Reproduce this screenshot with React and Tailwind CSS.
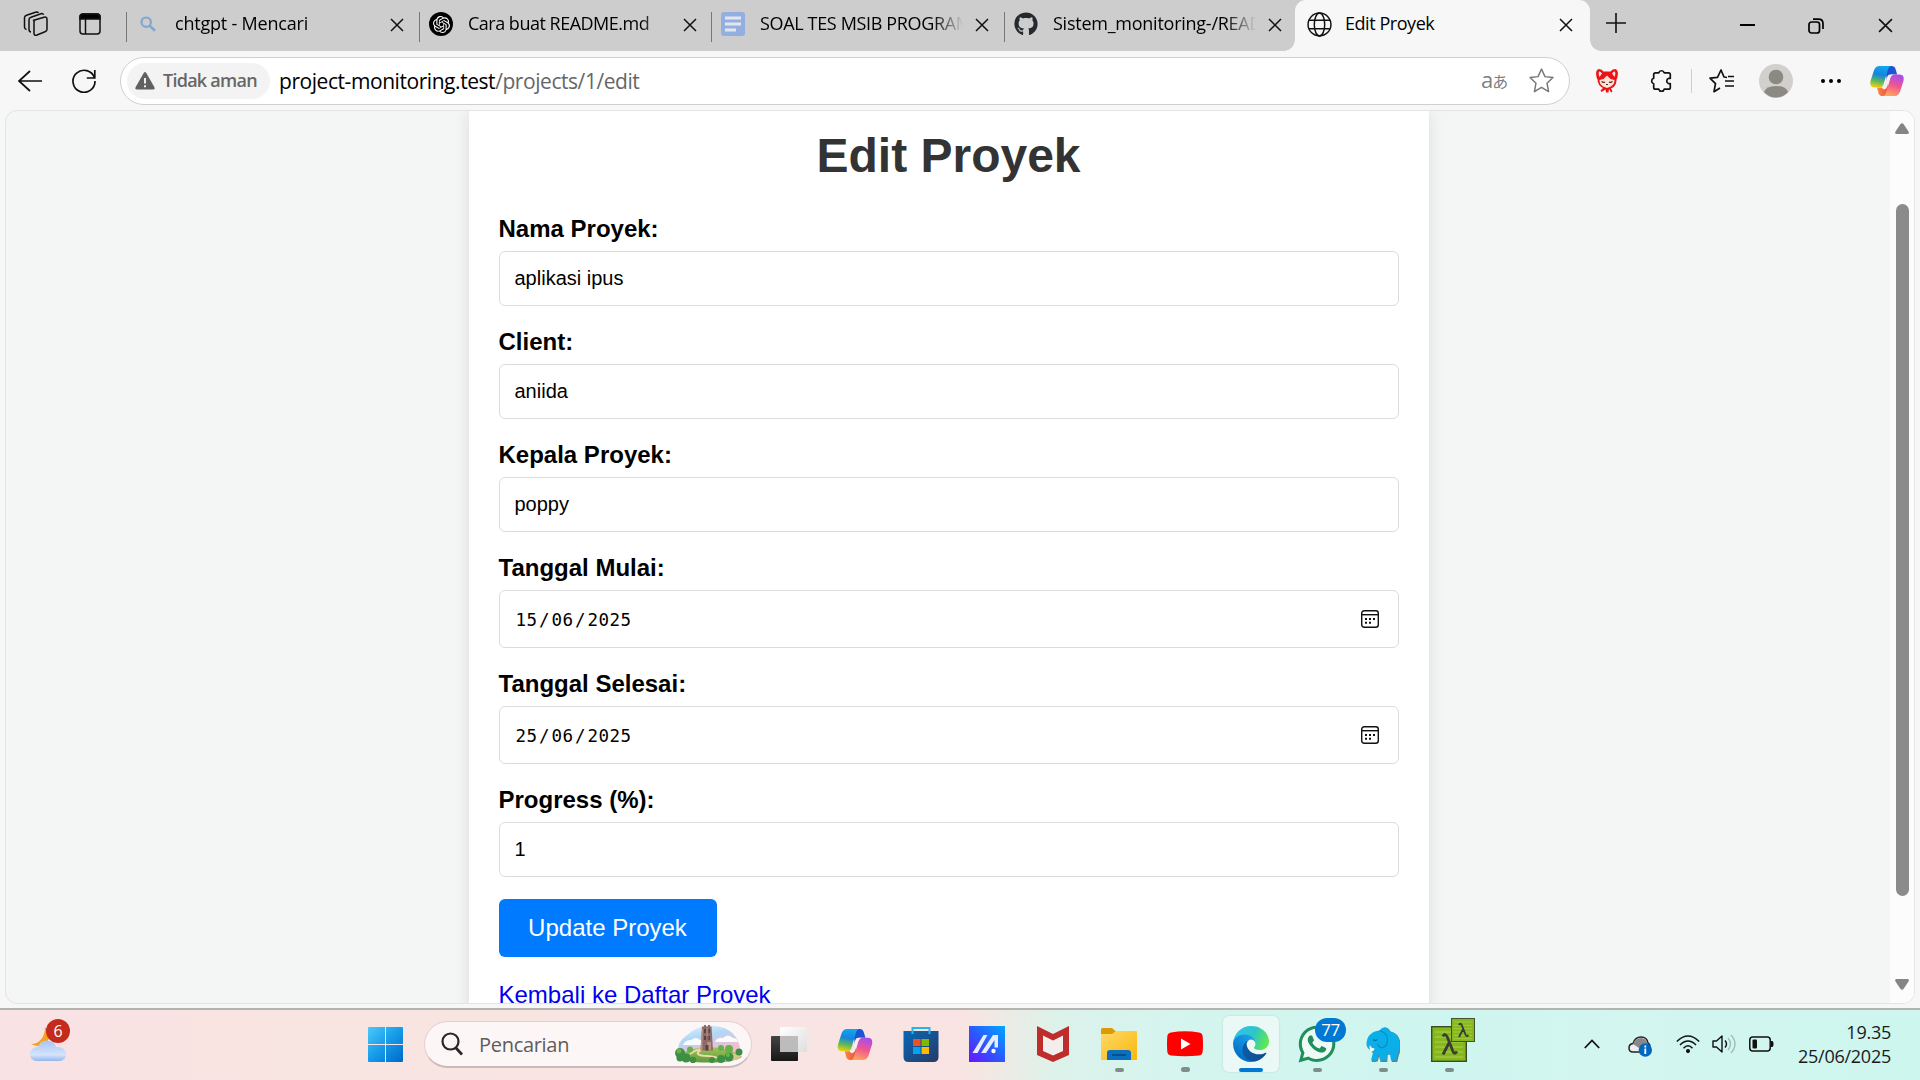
import React from "react";
import { FaGithub, FaWhatsapp } from "react-icons/fa6";
import { SiOpenai } from "react-icons/si";

const Cross = ({ className = "w-[14px] h-[14px]" }) => (
  <svg viewBox="0 0 14 14" className={className} stroke="#111" strokeWidth="1.5" fill="none">
    <path d="M1 1l12 12M13 1L1 13" />
  </svg>
);

const SearchFavicon = () => (
  <svg viewBox="0 0 16 16" className="ml-[4px] h-4 w-4" fill="none" stroke="#7fa8d0" strokeWidth="2.2">
    <circle cx="6.2" cy="6.2" r="4.7" />
    <path d="M9.6 9.6l5.4 5.2" strokeWidth="2.6" />
  </svg>
);

const GptFavicon = () => (
  <span className="flex h-6 w-6 items-center justify-center rounded-full bg-black">
    <SiOpenai className="h-[17px] w-[17px] text-white" />
  </span>
);

const DocFavicon = () => (
  <svg viewBox="0 0 24 24" className="h-6 w-6">
    <rect width="24" height="24" rx="3" fill="#93aee0" />
    <path d="M4 6h16M4 12h16M4 18h11" stroke="#e4e6ea" strokeWidth="2.8" />
  </svg>
);

const Globe = () => (
  <svg viewBox="0 0 24 24" className="h-[25px] w-[25px]" fill="none" stroke="#111" strokeWidth="1.4">
    <circle cx="12" cy="12" r="11" />
    <ellipse cx="12" cy="12" rx="5" ry="11" />
    <path d="M2 8h20M2 16h20" />
  </svg>
);

const tabs = [
  { title: "chtgpt - Mencari", icon: <SearchFavicon />, w: "w-[293px]", track: "tracking-[-0.2px]" },
  { title: "Cara buat README.md", icon: <GptFavicon />, w: "w-[292px]", track: "tracking-[-0.5px]" },
  { title: "SOAL TES MSIB PROGRAM", icon: <DocFavicon />, w: "w-[293px]", track: "tracking-[-0.35px]" },
  { title: "Sistem_monitoring-/README", icon: <FaGithub className="h-6 w-6 text-[#24292f]" />, w: "w-[291px]", track: "tracking-[-0.25px]" },
];

function TabStrip() {
  return (
    <div className="flex h-[51px] bg-[#cdcdcd] text-[18px] text-black">
      <div className="flex w-[126px] items-center pb-[3px] pl-[23px]">
        <svg viewBox="0 0 26 26" className="h-[26px] w-[26px]" fill="none" stroke="#111" strokeWidth="1.5">
          <path d="M10 9.5l11-3.3q3-.7 3 2v10q0 1.8-2 2.5l-8 3.3q-3 1-3-1.800V11q0-1.200 1-1.500z" />
          <path d="M8 21q-2-.2-2-2.500V8.500Q6 7 8 6.300l10-3.600q2-.5 2.600 1" />
          <path d="M3.500 18.500Q1.500 18 1.500 16V6.500q0-1.500 2-2.200L12.500 1.200q2.200-.6 3 .8" />
        </svg>
        <svg viewBox="0 0 22 22" className="ml-[30px] h-[22px] w-[22px]" fill="none" stroke="#111" strokeWidth="1.5">
          <rect x="1" y="1" width="20" height="20" rx="3" />
          <path d="M1 6V4q0-3 3-3h14q3 0 3 3v2z" fill="#000" />
          <path d="M6.500 6v15" />
        </svg>
      </div>
      {tabs.map((t) => (
        <div key={t.title} className={`flex shrink-0 items-center pb-[3px] ${t.w}`}>
          <span className="mt-[6px] h-[30px] w-px shrink-0 bg-[#777]" />
          <span className="ml-[9px] flex w-6 shrink-0 justify-start">{t.icon}</span>
          <span className={`ml-[15px] mt-[-1px] w-[203px] shrink-0 overflow-hidden whitespace-nowrap ${t.track} [mask-image:linear-gradient(to_right,black_85%,transparent)]`}>
            {t.title}
          </span>
          <span className="ml-[12px] mt-[2px] flex">
            <Cross />
          </span>
        </div>
      ))}
      <div className="relative flex w-[295px] shrink-0 items-center rounded-t-[11px] bg-[#f7f7f7] pb-[3px] pl-[12px]">
        <span className="absolute -left-[11px] bottom-0 h-[11px] w-[11px] bg-[radial-gradient(circle_at_0_0,transparent_10.500px,#f7f7f7_11px)]" />
        <span className="absolute -right-[11px] bottom-0 h-[11px] w-[11px] bg-[radial-gradient(circle_at_100%_0,transparent_10.500px,#f7f7f7_11px)]" />
        <Globe />
        <span className="ml-[13px] mt-[-1px] w-[214px] tracking-[-0.45px]">Edit Proyek</span>
        <span className="mt-[2px]">
          <Cross />
        </span>
      </div>
      <svg viewBox="0 0 20 20" className="ml-[16px] mt-[13px] h-5 w-5" stroke="#111" strokeWidth="1.6">
        <path d="M10 0v20M0 10h20" />
      </svg>
      <span className="ml-[114px] mt-[24px] h-[2px] w-[15px] bg-black" />
      <svg viewBox="0 0 16 16" className="ml-[53px] mt-[18px] h-4 w-4" fill="none" stroke="#000" strokeWidth="1.7">
        <rect x="1" y="4" width="10.500" height="11" rx="2.500" />
        <path d="M5 1.200h5.500q4.500 0 4.500 4.500V11" />
      </svg>
      <span className="ml-[54px] mt-[18px]">
        <Cross className="h-[15px] w-[15px]" />
      </span>
    </div>
  );
}

const Copilot = ({ id, className }) => (
  <svg viewBox="0 0 36 34" className={className}>
    <defs>
      <linearGradient id={`${id}a`} x1="0.500" y1="0" x2="0.300" y2="1">
        <stop offset="0" stopColor="#12a5f2" />
        <stop offset="0.400" stopColor="#1685dc" />
        <stop offset="0.700" stopColor="#5bb75f" />
        <stop offset="1" stopColor="#f4cf0c" />
      </linearGradient>
      <linearGradient id={`${id}b`} x1="0.700" y1="0" x2="0.400" y2="1">
        <stop offset="0" stopColor="#a64df0" />
        <stop offset="0.500" stopColor="#ef5591" />
        <stop offset="1" stopColor="#ffa45b" />
      </linearGradient>
      <linearGradient id={`${id}c`} x1="0" y1="0" x2="1" y2="0.500">
        <stop offset="0" stopColor="#1451cf" />
        <stop offset="1" stopColor="#2456d9" />
      </linearGradient>
      <linearGradient id={`${id}d`}>
        <stop offset="0" stopColor="#fb8b3a" />
        <stop offset="1" stopColor="#e84a4a" />
      </linearGradient>
    </defs>
    <path d="M16 1h7q3 0 4 3l1.800 6H24q-3 0-4 3l-2 5z" fill={`url(#${id}c)`} />
    <path d="M20 33h-7q-3 0-4-3l-1.600-6H12q3 0 4-3l2-6z" fill={`url(#${id}d)`} />
    <path d="M10 1h13q-3 0-4 4l-4.500 15q-1 4-5 4H5q-6 0-4.500-7L4 6q1.500-5 6-5z" fill={`url(#${id}a)`} />
    <path d="M26 33H13q3 0 4-4l4.500-15q1-4 5-4H31q6 0 4.500 7L32 28q-1.500 5-6 5z" fill={`url(#${id}b)`} />
    <path d="M18.300 12.500q.8-2.500 3-2.500h3.500q-2.800.5-3.600 3.500l-3.300 10q-.9 2.500-3.100 2.500-1.600-.2-2.300-2 2.600-.7 3.300-3z" fill="#f7eff0" />
  </svg>
);

function AddressRow() {
  return (
    <div className="flex h-[59px] shrink-0 items-center bg-[#f7f7f7]">
      <svg viewBox="0 0 24 22" className="ml-[18px] h-[22px] w-6" fill="none" stroke="#111" strokeWidth="1.700">
        <path d="M24 11H1M12 1L1 11l11 10" />
      </svg>
      <svg viewBox="0 0 24 24" className="ml-[30px] h-6 w-6" fill="none" stroke="#111" strokeWidth="1.700">
        <path d="M22.500 9A11 11 0 1 0 23 12M22.800 1v8h-8" />
      </svg>
      <div className="ml-[24px] flex h-[48px] w-[1450px] items-center rounded-full border-[1.500px] border-[#cfcfcf] bg-white pl-[6px]">
        <div className="flex h-9 w-[143px] items-center rounded-full bg-[#f3f3f3] pl-[8px]">
          <svg viewBox="0 0 20 18" className="h-[18px] w-5">
            <path d="M8.700 1q1.300-1.800 2.600 0l8 14q1 2.500-1.500 2.500H2.200Q-.3 17.500.7 15z" fill="#606060" />
            <path d="M10 6v5.500M10 13.200v2" stroke="#fff" strokeWidth="1.800" />
          </svg>
          <span className="ml-[8px] whitespace-nowrap text-[18px] font-semibold tracking-[-0.750px] text-[#676767]">Tidak aman</span>
        </div>
        <div className="ml-[9px] mt-[2px] w-[1202px] whitespace-nowrap text-[21px] tracking-[-0.440px] text-black">
          project-monitoring.test<span className="text-[#666]">/projects/1/edit</span>
        </div>
        <div className="flex w-[30px] items-center text-[#808080]">
          <span className="mt-[-3px] text-[22px] leading-none">a</span>
          <span className="ml-[-1px] font-['Noto_Sans_CJK_JP',sans-serif] text-[16px] leading-none">あ</span>
        </div>
        <svg viewBox="0 0 24 24" className="ml-[18px] h-[25px] w-[25px]" fill="none" stroke="#777" strokeWidth="1.400" strokeLinejoin="round">
          <path d="M12 1l3.300 7.300 7.700.9-5.700 5.400 1.500 8.100L12 18.600l-6.800 4.100 1.500-8.100L1 9.200l7.700-.9z" />
        </svg>
      </div>
      <svg viewBox="0 0 22 24" className="ml-[26px] h-6 w-[22px]">
        <path d="M3 0q3 0 4.500 2.500h7Q16 0 19 0q3.500 1 2.800 6-.3 3-1.300 4.500.2 5.500-3.500 8l-2 .8 1.500 3.200-1.500 1-2-3.500-.5 3.500h-2.500l-.5-3-4 2.500-1-1.500L7 19q-5.300-2.500-5.500-8.500Q.5 9 .2 6-.5 1 3 0z" fill="#ee1118" />
        <path d="M3 2.500q2 0 3 2L3.500 8Q2 5 3 2.500zM19 2.500q-2 0-3 2L18.500 8q1.500-3 .5-5.500z" fill="#fbe3d3" />
        <path d="M3.500 11l4-1 3.500-3.500 3.500 3.500 4 1q.3 6-7.500 8-7.800-2-7.500-8z" fill="#fde5d3" />
        <path d="M5.500 12.500q2 1.500 3.500.5M16.500 12.500q-2 1.500-3.500.5M10 15.500h2" fill="none" stroke="#5a2520" strokeWidth="1.200" />
      </svg>
      <svg viewBox="0 0 24 24" className="ml-[31px] h-6 w-6" fill="none" stroke="#111" strokeWidth="1.700" strokeLinejoin="round">
        <path d="M6.500 3.800h3.300a2.800 2.800 0 0 1 5.400 0h4.300q1.800 0 1.800 1.800v3.700h-1.500a2.800 2.800 0 0 0 0 5.400h1.500v3.700q0 1.800-1.800 1.800h-4.300a2.800 2.800 0 0 1-5.400 0H6.500q-1.800 0-1.800-1.800v-3.700a2.800 2.800 0 0 1 0-5.400V5.600q0-1.800 1.800-1.800z" />
      </svg>
      <span className="ml-[18px] h-6 w-px bg-[#cfcfcf]" />
      <svg viewBox="0 0 26 24" className="ml-[17px] h-6 w-[26px]" fill="none" stroke="#111" strokeWidth="1.700" strokeLinejoin="round">
        <path d="M18 8.500l-3-.5L12 1 8.500 8.300 1 9.200l5.500 5.400L5 22.700l6-3.700M16 12h9M16 17h9M19 7.500h6" />
      </svg>
      <svg viewBox="0 0 34 34" className="ml-[24px] h-[34px] w-[34px]">
        <circle cx="17" cy="17" r="17" fill="#d2d0cc" />
        <circle cx="17" cy="13" r="7.300" fill="#8c8985" />
        <path d="M5 28q2-6 12-6t12 6q-5 5.500-12 5.500T5 28z" fill="#8c8985" />
      </svg>
      <svg viewBox="0 0 22 6" className="ml-[27px] h-[6px] w-[22px]">
        <circle cx="3" cy="3" r="2" />
        <circle cx="11" cy="3" r="2" />
        <circle cx="19" cy="3" r="2" />
      </svg>
      <Copilot id="bar" className="ml-[28px] h-8 w-[34px]" />
    </div>
  );
}

const CalendarIcon = () => (
  <svg viewBox="0 0 18 18" className="h-[18px] w-[18px]" fill="none" stroke="#111" strokeWidth="1.400">
    <rect x="0.700" y="0.700" width="16.600" height="16.600" rx="2.500" />
    <path d="M1 4.700h16" />
    <path d="M4 9h2M8 9h2M12 9h2M4 12.700h2M8 12.700h2" strokeWidth="2" />
  </svg>
);

const DateValue = ({ value }) => {
  const [d, m, y] = value.split("/");
  return (
    <span className="ml-px flex pt-[2px] font-['DejaVu_Sans_Mono',monospace] text-[17.500px] tracking-[0.460px]">
      {d}
      <span className="w-[14px] text-center">/</span>
      {m}
      <span className="w-[14px] text-center">/</span>
      {y}
    </span>
  );
};

const fields = [
  { label: "Nama Proyek:", value: "aplikasi ipus" },
  { label: "Client:", value: "aniida" },
  { label: "Kepala Proyek:", value: "poppy" },
  { label: "Tanggal Mulai:", value: "15/06/2025", date: true },
  { label: "Tanggal Selesai:", value: "25/06/2025", date: true },
  { label: "Progress (%):", value: "1" },
];

function Page() {
  return (
    <div className="mx-[5px] flex h-[894px] overflow-hidden rounded-[12px] border border-[#e3e5e5] bg-[#f4f6f6] font-['Liberation_Sans',Arial,sans-serif]">
      <div className="flex grow justify-center overflow-hidden pl-px">
        <main className="h-[960px] w-[960px] bg-white px-[30px] pt-[17px] shadow-[0_0_15px_rgba(0,0,0,0.1)]">
          <h1 className="text-center text-[48px] font-bold leading-[55px] text-[#333]">Edit Proyek</h1>
          <form className="pt-[32px]">
            {fields.map((f) => (
              <div key={f.label} className="mb-[22px]">
                <label className="block h-[36px] text-[24px] font-bold leading-[27px] text-black">{f.label}</label>
                <div
                  className={`flex items-center justify-between rounded-[6px] border border-[#dcdcdc] pl-[15px] pr-[19px] text-[20px] text-black ${f.date ? "h-[58px]" : "h-[55px]"}`}
                >
                  {f.date ? <DateValue value={f.value} /> : <span className="pb-[2px]">{f.value}</span>}
                  {f.date && <CalendarIcon />}
                </div>
              </div>
            ))}
            <button type="button" className="block h-[58px] w-[218px] rounded-[6px] bg-[#007bff] text-[24px] text-white">
              Update Proyek
            </button>
            <a className="mt-[24px] block text-[24px] leading-[27px] text-[#0000ee] underline">Kembali ke Daftar Proyek</a>
          </form>
        </main>
      </div>
      <div className="flex w-[24px] shrink-0 flex-col items-center bg-[#fcfcfc]">
        <svg viewBox="0 0 14 11" className="mt-[12px] h-[11px] w-[14px] shrink-0">
          <path d="M5.500 1q1.500-1.500 3 0l5 7.500q1 2.500-1 2.500h-11q-2 0-1-2.500z" fill="#858585" />
        </svg>
        <span className="mt-[70px] h-[692px] w-[13px] shrink-0 rounded-full bg-[#8b8b8b]" />
        <svg viewBox="0 0 14 11" className="mt-[83px] h-[11px] w-[14px] shrink-0 rotate-180">
          <path d="M5.500 1q1.500-1.500 3 0l5 7.500q1 2.500-1 2.500h-11q-2 0-1-2.500z" fill="#858585" />
        </svg>
      </div>
    </div>
  );
}

const TaskView = () => (
  <svg viewBox="0 0 36 36" className="h-9 w-9">
    <defs>
      <linearGradient id="tv" x1="0" y1="0" x2="0" y2="1">
        <stop offset="0" stopColor="#444" />
        <stop offset="1" stopColor="#171717" />
      </linearGradient>
      <linearGradient id="tw" x1="0" y1="0" x2="1" y2="1">
        <stop offset="0" stopColor="#fff" />
        <stop offset="1" stopColor="#dedede" />
      </linearGradient>
    </defs>
    <rect y="10" width="27" height="25" rx="1" fill="url(#tv)" />
    <rect x="9" y="1" width="27" height="25" rx="1" fill="url(#tw)" />
    <rect x="9" y="10" width="18" height="16" fill="#bcbcbc" />
  </svg>
);

const Store = () => (
  <svg viewBox="0 0 36 36" className="h-9 w-9">
    <defs>
      <linearGradient id="st" x1="0" y1="0" x2="1" y2="1">
        <stop offset="0" stopColor="#0869b8" />
        <stop offset="1" stopColor="#263a66" />
      </linearGradient>
    </defs>
    <path d="M.5 5h35v26q0 5-5 5h-25q-5 0-5-5z" fill="url(#st)" />
    <path d="M9.500 8V2h17v6" fill="none" stroke="#22b5ee" strokeWidth="2" />
    <path d="M10 13h7.500v7H10z" fill="#f25022" />
    <path d="M18.500 13H26v7h-7.500z" fill="#7fba00" />
    <path d="M10 21h7.500v7H10z" fill="#00a4ef" />
    <path d="M18.500 21H26v7h-7.500z" fill="#ffb900" />
  </svg>
);

const MyAsus = () => (
  <svg viewBox="0 0 36 36" className="h-9 w-9">
    <defs>
      <linearGradient id="as" x1="0" y1="1" x2="1" y2="0">
        <stop offset="0" stopColor="#6a12ff" />
        <stop offset="0.500" stopColor="#2a5bff" />
        <stop offset="1" stopColor="#00a8ff" />
      </linearGradient>
    </defs>
    <rect width="36" height="36" fill="url(#as)" />
    <path d="M14.500 9h4L8.500 27H3.500zM24 9h5v12.500h-3.500V14L17 27h-5z" fill="#e4ecff" />
    <circle cx="24.500" cy="25" r="2.200" fill="#fff" />
  </svg>
);

const McAfee = () => (
  <svg viewBox="0 0 32 36" className="h-9 w-8">
    <path d="M0 0l16 8 16-8v29l-16 7-16-7z" fill="#bf2c2c" />
    <path d="M6 9.500l10 5 10-5V25l-10 4.500L6 25z" fill="#f2eeeb" />
  </svg>
);

const Folder = () => (
  <svg viewBox="0 0 36 36" className="h-9 w-9">
    <defs>
      <linearGradient id="fo" x1="0" y1="0" x2="1" y2="1">
        <stop offset="0" stopColor="#ffd968" />
        <stop offset="1" stopColor="#f9b70c" />
      </linearGradient>
    </defs>
    <path d="M0 3.500Q0 2 1.500 2H11l4 3.500L12 9H0z" fill="#dc9a06" />
    <path d="M0 8h11l4-3h20q1 0 1 1v28H0z" fill="url(#fo)" />
    <path d="M6 34V27q0-3 3-3h18q3 0 3 3v7z" fill="#0b6fc0" />
    <path d="M11 29h14" stroke="#07437f" strokeWidth="1.500" />
  </svg>
);

const YouTube = () => (
  <svg viewBox="0 0 36 26" className="h-[26px] w-9">
    <path d="M4 1.500Q18-.8 32 1.500q3.500.5 3.700 4 .6 8 0 15-.2 3.500-3.700 4-14 1.600-28 0-3.500-.5-3.700-4-.6-8 0-15 .2-3.500 3.700-4z" fill="#f00" />
    <path d="M14 7.500l9.500 5.500-9.500 5.500z" fill="#fff" />
  </svg>
);

const Edge = () => (
  <svg viewBox="0 0 256 256" className="h-9 w-9">
    <defs>
      <linearGradient id="e1" x1="0.200" x2="1" y1="0.700" y2="0.700">
        <stop offset="0" stopColor="#0c59a4" />
        <stop offset="1" stopColor="#114a8b" />
      </linearGradient>
      <linearGradient id="e2" x1="0.800" y1="0.200" x2="0.300" y2="1">
        <stop offset="0" stopColor="#1b9de2" />
        <stop offset="0.500" stopColor="#0b85d9" />
        <stop offset="1" stopColor="#0067b8" />
      </linearGradient>
      <linearGradient id="e3" x1="0" y1="0.400" x2="1" y2="0.700">
        <stop offset="0" stopColor="#35c1f1" />
        <stop offset="0.500" stopColor="#2cc5c8" />
        <stop offset="1" stopColor="#66eb45" />
      </linearGradient>
    </defs>
    <path fill="url(#e1)" d="M231.070 190.540c-3.400 1.770-6.900 3.340-10.500 4.700a101.100 101.100 0 0 1-35.650 6.460c-47.050 0-88.040-32.360-88.040-73.900a31.420 31.420 0 0 1 16.390-27.260c-42.560 1.790-53.500 46.150-53.500 72.120 0 73.400 67.700 80.900 82.250 80.900 7.860 0 19.720-2.300 26.820-4.550l1.310-.44a128.340 128.340 0 0 0 66.600-52.800 4 4 0 0 0-5.680-5.230z" />
    <path fill="url(#e2)" d="M105.730 241.420a79.200 79.200 0 0 1-22.740-21.340 80.720 80.720 0 0 1 29.600-120.880c3.130-1.470 8.450-4.070 15.560-3.960a32.350 32.350 0 0 1 25.690 13.010 31.900 31.900 0 0 1 6.360 18.660c0-.2 24.460-79.600-80-79.600-43.900 0-80 41.670-80 78.210a130.160 130.160 0 0 0 12.110 56 128 128 0 0 0 156.380 67.110 75.550 75.550 0 0 1-62.780-8.840z" />
    <path fill="url(#e3)" d="M152.330 148.860c-.81 1.050-3.300 2.500-3.300 5.660 0 2.610 1.700 5.120 4.720 7.230 14.380 10 41.490 8.680 41.560 8.680a59.560 59.560 0 0 0 30.270-8.350 61.380 61.380 0 0 0 30.430-52.880c.26-22.410-8-37.310-11.340-43.910C223.460 23.840 177.720 0 128 0A128 128 0 0 0 0 126.200c.48-36.540 36.800-66.050 80-66.050 3.500 0 23.460.34 42 10.070 16.340 8.580 24.900 18.940 30.850 29.210 6.180 10.670 7.280 24.150 7.280 29.520 0 5.370-2.740 13.330-7.800 19.910z" />
  </svg>
);

const Whatsapp = () => (
  <div className="relative">
    <svg viewBox="0 0 36 36" className="h-9 w-9">
      <path d="M1 35l2.500-9.500A16.500 16.500 0 1 1 11 33z" fill="#eefaf5" />
    </svg>
    <FaWhatsapp className="absolute -left-[3px] -top-[3px] h-[42px] w-[42px] text-[#1f8f5c]" />
    <span className="absolute -top-[8px] left-[16px] flex h-6 w-[31px] items-center justify-center rounded-full bg-[#0078d4] text-[17px] tracking-[-0.500px] text-white">
      77
    </span>
  </div>
);

const Elephant = () => (
  <svg viewBox="0 0 34 36" className="h-9 w-[34px]">
    <path
      d="M13.500 4.500Q16 1 19.500 1.300q3 .5 4.500 4 8 1.500 9.500 10 1 8-1.500 13.500l-1.500 6.500h-5.500L24 28h-3l-.5 7.300h-6.800L12.500 29 11 34.500q-3.500 1.500-6 .5l2-8q-2-1.500-2.700-3.500Q0 22 .5 17 1.500 6 13.500 4.500z"
      transform="translate(0.800 0.700)"
      fill="#35525c"
      opacity="0.700"
    />
    <path d="M13.500 4.500Q16 1 19.500 1.300q3 .5 4.500 4 8 1.500 9.500 10 .5 8-2 13.500L30 34.500h-5L24 28h-3l-.5 6.500h-6.300L12.500 28 11 34q-3.500 1.500-6 .5l2-8q-2-1.500-2.700-3.500Q0 22 .5 17 1.500 6 13.500 4.500z" fill="#0aaee8" />
    <path d="M13.500 4.500q8 2.500 8 9 0 7-6 8.500-3-1-4-4" fill="none" stroke="#058dc4" strokeWidth="1.200" />
    <path d="M7 13.500q2 2 4.500 0" fill="none" stroke="#05759f" strokeWidth="1.200" />
    <path d="M3.800 19q1.500 3.500 5 3.500-1 2.500-3.300 3-2.700-2.500-1.700-6.500z" fill="#fff" />
  </svg>
);

const Lambda = ({ className }) => (
  <svg viewBox="0 0 36 36" className={className}>
    <rect x="0.700" y="0.700" width="34.600" height="34.600" fill="#86b81b" stroke="#3c4a2b" strokeWidth="1.400" />
    <path d="M4 6h28M4 11h28M4 16h28M4 21h28M4 26h28M4 31h28" stroke="#a9cf52" strokeWidth="1.200" />
    <path d="M12 10.500q2-4.500 4.500 1l5.500 14q1.500 3.500 4 0M18.500 16l-6.500 12.500" fill="none" stroke="#3a3c38" strokeWidth="2.800" />
  </svg>
);

const apps = [
  { id: "taskview", icon: <TaskView /> },
  { id: "copilot", icon: <Copilot id="dock" className="h-[33px] w-9" /> },
  { id: "store", icon: <Store /> },
  { id: "asus", icon: <MyAsus /> },
  { id: "mcafee", icon: <McAfee /> },
  { id: "folder", icon: <Folder />, dot: true },
  { id: "youtube", icon: <YouTube />, dot: true },
  { id: "edge", icon: <Edge />, active: true },
  { id: "whatsapp", icon: <Whatsapp />, dot: true },
  { id: "elephant", icon: <Elephant />, dot: true },
  {
    id: "notepads",
    icon: (
      <div className="relative">
        <Lambda className="h-9 w-9" />
        <Lambda className="absolute -top-[8px] left-[20px] h-6 w-6" />
      </div>
    ),
    dot: true,
  },
];

const Castle = () => (
  <svg viewBox="0 0 68 38" className="h-[38px] w-[68px]">
    <defs>
      <linearGradient id="sky" x1="0" y1="0" x2="0.500" y2="1">
        <stop offset="0" stopColor="#e4f3fd" />
        <stop offset="0.450" stopColor="#a9d3f7" />
        <stop offset="1" stopColor="#f6b6c6" />
      </linearGradient>
      <linearGradient id="hill" x1="0" y1="0" x2="0" y2="1">
        <stop offset="0" stopColor="#a3c558" />
        <stop offset="1" stopColor="#5c9a3a" />
      </linearGradient>
    </defs>
    <path d="M3 27Q2 17 12 10 22 0 38 1q14 0 22 10 6 8 5 18z" fill="url(#sky)" opacity="0.900" />
    <path d="M8 20q2-5 8-5 5-4 9 0 4-1 5 5zM40 17q2-5 8-4 5-5 10 0 4 0 5 4z" fill="#fff" opacity="0.900" />
    <path d="M1 32q14-10 33-10t33 10q-8 5.500-33 5.500T1 32z" fill="url(#hill)" />
    <path d="M50 30q10-4 17 1-6 6-17 5z" fill="#d9c48a" />
    <path d="M15 29q6-5 14-5-8 3-6 5t10 2q12 1 14 5" fill="none" stroke="#ecd9a6" strokeWidth="1.800" />
    <path d="M25.500 25.500L27 1.500h2V0h2v1.500h2V0h2v1.500h1.500L38 25.500z" fill="#8d6c68" />
    <path d="M27 4l1 0-.8 21h-1.700zM31.500 3h1v8h-1zM32 17h4v8h-3z" fill="#bb9484" />
    <path d="M29 4h2v4h-2zM33.500 4h1.500v4h-1.500zM29 11h2v4h-2zM33.500 11H35v4h-1.500zM30.500 20h3v5.500h-3z" fill="#594045" />
    <g fill="#3d8f44">
      <circle cx="5" cy="28" r="5" />
      <circle cx="11" cy="33" r="4.500" />
      <circle cx="5" cy="33" r="3.500" />
      <circle cx="18" cy="35" r="3.200" />
      <circle cx="37" cy="35" r="3" />
      <circle cx="46" cy="34" r="4" />
      <circle cx="54" cy="32" r="4.500" />
      <circle cx="64" cy="27" r="3.500" />
    </g>
    <g fill="#67b04a">
      <circle cx="15" cy="24.500" r="3" />
      <circle cx="46" cy="23" r="3" />
      <circle cx="54" cy="24" r="4" />
      <circle cx="4" cy="26" r="2.500" />
      <circle cx="53" cy="30" r="2" />
    </g>
  </svg>
);

function Taskbar() {
  return (
    <div className="flex h-[72px] border-t-2 border-[#b5b3b0] bg-[linear-gradient(to_right,#f8e2e4_0%,#f8e4e1_14%,#f9e4e3_50%,#f2e8e2_51.500%,#dcf2eb_55%,#d4f5ee_62%,#cff5f0_75%,#d3f6ef_85%,#cdf6ef_100%)]">
      <div className="relative ml-[30px] mt-[17px] h-[44px] w-[41px]">
        <svg viewBox="0 0 36 36" className="h-9 w-9">
          <defs>
            <linearGradient id="cl" x1="0" y1="0" x2="0" y2="1">
              <stop offset="0" stopColor="#a8c3f5" />
              <stop offset="0.700" stopColor="#d4e4fb" />
              <stop offset="1" stopColor="#8fb5ee" />
            </linearGradient>
          </defs>
          <path d="M15 0q8 8 2 15-7 7-16 2 6 0 10-4.500T15 0z" fill="#f4a21f" />
          <path d="M7 34Q0 34 0 27q1-7 8-7 3-8 11-6 6 1 7 6 9-1 10 7 0 7-7 7z" fill="url(#cl)" />
        </svg>
        <span className="absolute -top-[8px] left-[16px] flex h-6 w-6 items-center justify-center rounded-full bg-[#c42b1c] text-[16px] text-white">6</span>
      </div>
      <svg viewBox="0 0 35 35" className="ml-[297px] mt-[17px] h-[35px] w-[35px]">
        <defs>
          <linearGradient id="wi" gradientUnits="userSpaceOnUse" x1="0" y1="0" x2="35" y2="35">
            <stop offset="0" stopColor="#4cc8fb" />
            <stop offset="0.500" stopColor="#159be8" />
            <stop offset="1" stopColor="#0068c8" />
          </linearGradient>
        </defs>
        <path d="M0 1q0-1 1-1h16v17H0zM18 0h16q1 0 1 1v16H18zM0 18h17v17H1q-1 0-1-1zM18 18h17v16q0 1-1 1H18z" fill="url(#wi)" />
      </svg>
      <div className="ml-[21px] mt-[11px] flex h-[47px] w-[328px] items-center rounded-full border border-b-2 border-[#e6cfd0] border-b-[#ccb9b9] bg-[#fdf6f6] pl-[16px]">
        <svg viewBox="0 0 22 24" className="h-6 w-[22px]" fill="none" stroke="#2a2727" strokeWidth="2.200">
          <circle cx="9.500" cy="9.500" r="8" />
          <path d="M14.500 15.500l6.500 7" strokeWidth="2.800" />
        </svg>
        <span className="ml-[16px] mt-[2px] w-[196px] text-[20px] tracking-[-0.300px] text-[#605c5c]">Pencarian</span>
        <Castle />
      </div>
      <div className="ml-[4px] flex">
        {apps.map((a) => (
          <div key={a.id} className="flex w-[66px] flex-col items-center pt-[6px]">
            <div
              className={`flex h-[56px] w-[56px] flex-col items-center rounded-[6px] pt-[10px] ${a.active ? "bg-[#eaf9f6] shadow-[0_0_2px_rgba(0,0,0,0.150)]" : ""}`}
            >
              <div className="flex h-9 items-center justify-center">{a.icon}</div>
              {a.dot && <span className="mt-[6px] h-[5px] w-[9px] rounded-full bg-[#7d8e8b]" />}
              {a.active && <span className="mt-[6px] h-[5px] w-6 rounded-full bg-[#0078d4]" />}
            </div>
          </div>
        ))}
      </div>
      <div className="ml-auto flex items-center pb-[3px] pr-[29px]">
        <svg viewBox="0 0 16 10" className="h-[10px] w-4" fill="none" stroke="#111" strokeWidth="1.800">
          <path d="M.8 9L8 1.500 15.200 9" />
        </svg>
        <svg viewBox="0 0 24 22" className="ml-[28px] mt-[4px] h-[22px] w-6">
          <path d="M5 17q-4 0-4-4 0-4 4-4.500Q7 2 13 2q6 0 7 6 2 1 2 4v5z" fill="#eee" stroke="#222" strokeWidth="1.500" />
          <path d="M5 9q2-6 8-6 5 0 6.500 6L11 13z" fill="#888" />
          <circle cx="17.300" cy="15" r="6.700" fill="#0067c0" />
          <path d="M17.300 13.500V19M17.300 10.500v2" stroke="#fff" strokeWidth="1.800" />
        </svg>
        <svg viewBox="0 0 24 18" className="ml-[24px] h-[18px] w-6" fill="none" stroke="#111" strokeWidth="1.500">
          <path d="M.8 6.500Q12-4.500 23.200 6.500M4 10q8-8 16 0M7.500 13.300q4.500-5 9 0" />
          <circle cx="12" cy="16" r="1.300" fill="#111" />
        </svg>
        <svg viewBox="0 0 25 20" className="ml-[12px] h-5 w-[25px]" fill="none" stroke="#111" strokeWidth="1.400" strokeLinejoin="round">
          <path d="M1 7h3.500L10 2v16l-5.500-5H1z" />
          <path d="M13 6.500q3 3.500 0 7" />
          <path d="M16 4q5 6 0 12M19 1q8 9 0 18" stroke="#9fbdb9" />
        </svg>
        <svg viewBox="0 0 25 16" className="ml-[12px] h-4 w-[25px]">
          <rect x="0.800" y="1" width="20.400" height="14" rx="3" fill="none" stroke="#111" strokeWidth="1.500" />
          <rect x="3.500" y="3.500" width="4.500" height="9" rx="1" fill="#111" />
          <path d="M22 5h1q1.500 0 1.500 3T23 11h-1z" fill="#111" />
        </svg>
        <div className="ml-[16px] w-[101px] whitespace-nowrap text-right text-[18px] leading-6 tracking-[-0.250px] text-[#1a1a1a]">
          <div>19.35</div>
          <div className="flex justify-end">25/06/2025</div>
        </div>
      </div>
    </div>
  );
}

export default function App() {
  return (
    <div className="flex h-[1080px] w-[1920px] flex-col overflow-hidden bg-[#f7f7f7] font-['Open_Sans','Noto_Sans',sans-serif]">
      <TabStrip />
      <AddressRow />
      <div className="h-[898px] shrink-0">
        <Page />
      </div>
      <Taskbar />
    </div>
  );
}
